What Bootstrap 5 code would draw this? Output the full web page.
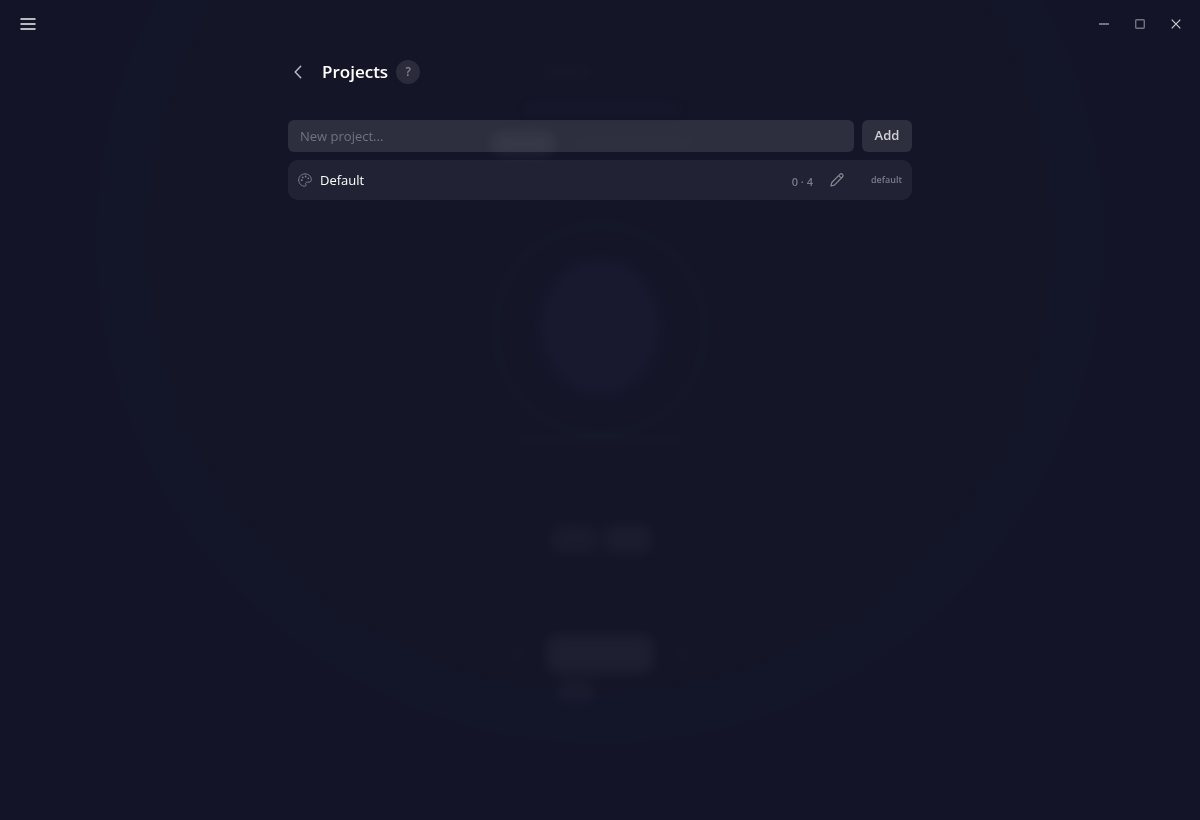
<!DOCTYPE html>
<html lang="en" data-bs-theme="dark">
<head>
<meta charset="utf-8">
<meta name="viewport" content="width=device-width, initial-scale=1">
<title>Projects</title>
<link href="https://cdn.jsdelivr.net/npm/bootstrap@5.3.0/dist/css/bootstrap.min.css" rel="stylesheet">
<style>
body{background:#141426;color:#fff;font-family:"Open Sans","Noto Sans",sans-serif;font-size:13px;line-height:20px}
.ghost{pointer-events:none;z-index:-1}
.titlebar{height:48px;padding:0 6px 0 10px}
.icon-btn{--bs-btn-padding-x:0;--bs-btn-padding-y:0;--bs-btn-border-width:0;width:36px;height:32px;color:#b9b9c1;line-height:1}
.icon-btn svg{display:block}
.icon-btn.win-btn{color:#72727f}
.icon-btn.win-close{color:#cdcdd3}
.panel{max-width:640px}
.icon-btn.back-btn{width:20px;height:24px}
.page-title{font-size:17px;line-height:24px;margin-left:14px}
.help-btn{width:24px;height:24px;background:#2b2b3c;color:#858590;font-size:12px;line-height:24px}
.field{height:32px;border:0;border-radius:6px;background:rgba(255,255,255,.11);color:#fff;padding:0 12px;font-size:13px}
.field:focus{background:rgba(255,255,255,.13)}
.field::placeholder{color:#727280}
.add-btn{height:32px;width:50px;padding:0;border:0;border-radius:6px;background:rgba(255,255,255,.11);color:#d0d0d4;font-size:13px;font-weight:600}
.project{height:40px;border-radius:10px;background:rgba(255,255,255,.06);padding:0 10px}
.project-icon{width:14px;height:24px;color:#81818c}
.minor{font-size:9px;line-height:16px;color:#7b7b88;font-weight:600}
.counts{font-size:11px;padding-top:4px;margin-right:12px}
.icon-btn.edit-btn{width:24px;height:24px;color:#888893;margin-right:22px}
</style>
</head>
<body class="min-vh-100">
<!-- Dimmed timer scene behind the panel -->
<svg class="ghost position-fixed top-0 start-0 w-100 h-100" viewBox="0 0 1200 820" preserveAspectRatio="xMidYMid slice" aria-hidden="true">
  <defs>
    <radialGradient id="halo" gradientUnits="userSpaceOnUse" cx="600" cy="240" r="506">
      <stop offset="0" stop-color="#141527"/><stop offset=".88" stop-color="#141527"/><stop offset=".9" stop-color="#131628"/><stop offset=".99" stop-color="#131628"/><stop offset="1" stop-color="#131427"/>
    </radialGradient>
    <filter id="soft" filterUnits="userSpaceOnUse" x="400" y="0" width="400" height="820" color-interpolation-filters="sRGB"><feGaussianBlur stdDeviation="7"/></filter>
  </defs>
  <rect width="1200" height="820" fill="#131427"/>
  <circle cx="600" cy="240" r="506" fill="url(#halo)"/>
  <g opacity=".03">
    <circle cx="600" cy="330" r="105" fill="none" stroke="#20a090" stroke-width="16" filter="url(#soft)" opacity=".6"/>
  </g>
  <g opacity=".035">
    <g filter="url(#soft)">
      <ellipse cx="600" cy="327" rx="62" ry="70" fill="#8868f0"/>
    </g>
  </g>
  <g opacity=".06">
    <g filter="url(#soft)" fill="#fff">
      <rect x="538" y="64" width="56" height="16" rx="6" opacity=".25"/>
      <rect x="520" y="101" width="165" height="16" rx="7" fill="#60d0ff" opacity=".3"/>
      <rect x="492" y="133" width="62" height="22" rx="8" opacity=".9"/>
      <rect x="570" y="135" width="130" height="16" rx="8" opacity=".2"/>
      <rect x="512" y="432" width="176" height="16" rx="6" opacity=".2"/>
      <rect x="550" y="524" width="48" height="30" rx="8" opacity=".45"/>
      <rect x="604" y="524" width="48" height="30" rx="8" opacity=".55"/>
      <rect x="546" y="634" width="108" height="40" rx="12" opacity=".7"/>
      <rect x="556" y="682" width="40" height="20" rx="6" opacity=".5"/>
      <circle cx="518" cy="653" r="10" opacity=".25"/>
      <circle cx="682" cy="653" r="10" opacity=".25"/>
    </g>
  </g>
</svg>

<header class="titlebar d-flex align-items-center justify-content-between">
  <button class="btn icon-btn d-flex align-items-center justify-content-center" type="button" aria-label="Menu">
    <svg width="16" height="14" viewBox="0 0 16 14" fill="none" stroke="currentColor" stroke-width="2"><path d="M.5 2h15M.5 7h15M.5 12h15"/></svg>
  </button>
  <div class="d-flex">
    <button class="btn icon-btn win-btn d-flex align-items-center justify-content-center" type="button" aria-label="Minimize">
      <svg width="10" height="10" viewBox="0 0 10 10" fill="none" stroke="currentColor" stroke-width="2"><path d="M0 5h10"/></svg>
    </button>
    <button class="btn icon-btn win-btn d-flex align-items-center justify-content-center" type="button" aria-label="Maximize">
      <svg width="10" height="10" viewBox="0 0 10 10" fill="none" stroke="currentColor" stroke-width="1.4"><rect x=".7" y=".7" width="8.6" height="8.6" rx="1"/></svg>
    </button>
    <button class="btn icon-btn win-close d-flex align-items-center justify-content-center" type="button" aria-label="Close">
      <svg width="10" height="10" viewBox="0 0 10 10" fill="none" stroke="currentColor" stroke-width="1.2"><path d="M.7.7l8.600 8.600M9.300.7L.7 9.300"/></svg>
    </button>
  </div>
</header>

<main class="panel container-fluid px-2 pt-2">
  <div class="d-flex align-items-center pt-1 mb-4 pb-2">
    <button class="btn icon-btn back-btn d-flex align-items-center justify-content-center" type="button" aria-label="Back">
      <svg width="8" height="14" viewBox="0 0 8 14" fill="none" stroke="currentColor" stroke-width="1.5" stroke-linecap="round" stroke-linejoin="round"><path d="M6.7 1.3L1.2 7l5.5 5.7"/></svg>
    </button>
    <h1 class="page-title fw-semibold mb-0 me-2">Projects</h1>
    <button class="btn help-btn rounded-circle border-0 p-0 fw-semibold" type="button" aria-label="Help">?</button>
  </div>
  <form class="d-flex gap-2 mb-2 pt-1">
    <input class="form-control field" type="text" placeholder="New project..." aria-label="New project">
    <button class="btn add-btn flex-shrink-0" type="button">Add</button>
  </form>
  <ul class="list-unstyled mb-0">
    <li class="project d-flex align-items-center">
      <svg class="project-icon flex-shrink-0" viewBox="0 0 14 14" fill="none" stroke="currentColor" stroke-width="1" stroke-linejoin="round"><path d="M7 .9C3.5.9.7 3.6.7 7s2.6 6.2 6 6.2c1.3 0 1.5-.9 1.1-1.7-.6-1.3.1-2.4 1.5-2.4h1.8c1.4 0 2.2-.8 2.2-2.3C13.300 3.300 10.500.9 7 .9z"/><g fill="currentColor" stroke="none"><circle cx="3.700" cy="7.200" r=".9"/><circle cx="4.700" cy="4.400" r=".9"/><circle cx="7.600" cy="3.500" r=".9"/><circle cx="10.300" cy="5.300" r=".9"/></g></svg>
      <span class="ms-2 flex-grow-1">Default</span>
      <span class="minor counts">0 · 4</span>
      <button class="btn icon-btn edit-btn d-flex align-items-center justify-content-center" type="button" aria-label="Edit project">
        <svg width="14" height="14" viewBox="0 0 14 14" fill="none" stroke="currentColor" stroke-width="1.2" stroke-linejoin="round"><path d="M1 13l.8-3.500L9.900 1.400c.8-.8 1.900-.8 2.600-.1s.7 1.900-.1 2.700L4.400 12.100 1 13zM8.700 2.600l2.600 2.600"/></svg>
      </button>
      <span class="minor">default</span>
    </li>
  </ul>
</main>
<script src="https://cdn.jsdelivr.net/npm/bootstrap@5.3.0/dist/js/bootstrap.bundle.min.js"></script>
</body>
</html>
